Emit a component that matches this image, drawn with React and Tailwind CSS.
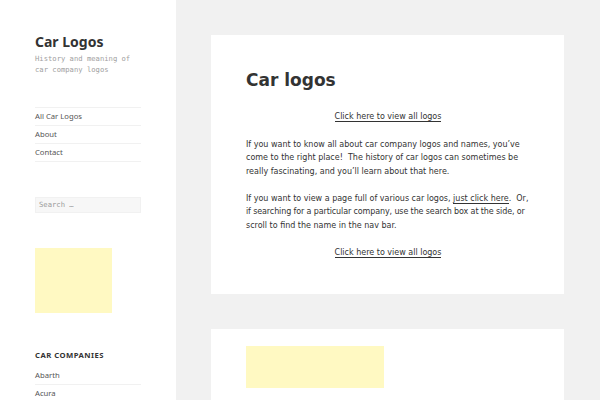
export default function App() {
  const nav = ['All Car Logos', 'About', 'Contact'];
  const body = { fontFamily: '"DejaVu Sans", Verdana, sans-serif' };
  const sans = { fontFamily: '"Noto Sans", sans-serif' };
  const mono = { fontFamily: '"DejaVu Sans Mono", monospace' };

  return (
    <div className="flex w-[600px] h-[400px] overflow-hidden bg-[#f1f1f1] text-[#333]">
      {/* sidebar */}
      <aside className="w-[176px] shrink-0 bg-white pl-[35px] pr-[35px] pt-[32px]" style={sans}>
        <h1 className="text-[14px] leading-[20px] font-bold text-[#333]">Car Logos</h1>
        <p className="mt-[1px] text-[7.2px] leading-[11px] text-[#a0a0a0]" style={mono}>
          History and meaning of<br />car company logos
        </p>

        <ul className="mt-[32px] border-t border-[#f1f1f1]">
          {nav.map((n) => (
            <li key={n} className="h-[18px] flex items-center border-b border-[#f1f1f1] text-[7.7px] text-[#555]">
              {n}
            </li>
          ))}
        </ul>

        <div className="mt-[35px] h-[16px] flex items-center px-[3px] bg-[#f7f7f7] border border-[#f1f1f1] text-[7.2px] text-[#9a9a9a]" style={mono}>
          Search …
        </div>

        <div className="mt-[35px] w-[77px] h-[65px] bg-[#fff9c2]" />

        <h2 className="mt-[37px] text-[7.7px] leading-[10px] font-bold tracking-[0.06em] uppercase text-[#333]">Car Companies</h2>
        <ul className="mt-[7px]">
          <li className="h-[18px] flex items-center border-b border-[#f1f1f1] text-[7.7px] text-[#555]">Abarth</li>
          <li className="h-[18px] flex items-center text-[7.7px] text-[#555]">Acura</li>
        </ul>
      </aside>

      {/* main */}
      <main className="flex-1 pl-[35px] pr-[36px] pt-[35px]" style={body}>
        <article className="bg-white pl-[35px] pr-[34px] pt-[35px] pb-[35px]">
          <h2 className="text-[17px] leading-[20px] font-bold text-[#333]">Car logos</h2>
          <div className="mt-[20px] text-[8px] leading-[13.5px]">
            <p className="text-center mb-[14px]">
              <a className="border-b border-[#333]">Click here to view all logos</a>
            </p>
            <p className="mb-[13.5px]">
              If you want to know all about car company logos and names, you’ve come to the right place!&nbsp; The history of car logos can sometimes be really fascinating, and you’ll learn about that here.
            </p>
            <p className="mb-[13.5px] whitespace-nowrap">
              If you want to view a page full of various car logos, <a className="border-b border-[#333]">just click here</a>.&nbsp; Or,
              <br />
              <span className="tracking-[-0.015em]">if searching for a particular company, use the search box at the side, or</span>
              <br />
              scroll to find the name in the nav bar.
            </p>
            <p className="text-center">
              <a className="border-b border-[#333]">Click here to view all logos</a>
            </p>
          </div>
        </article>

        <article className="mt-[35px] bg-white px-[35px] pt-[17px] h-[120px]">
          <div className="w-[138px] h-[42px] bg-[#fff9c2]" />
        </article>
      </main>
    </div>
  );
}
